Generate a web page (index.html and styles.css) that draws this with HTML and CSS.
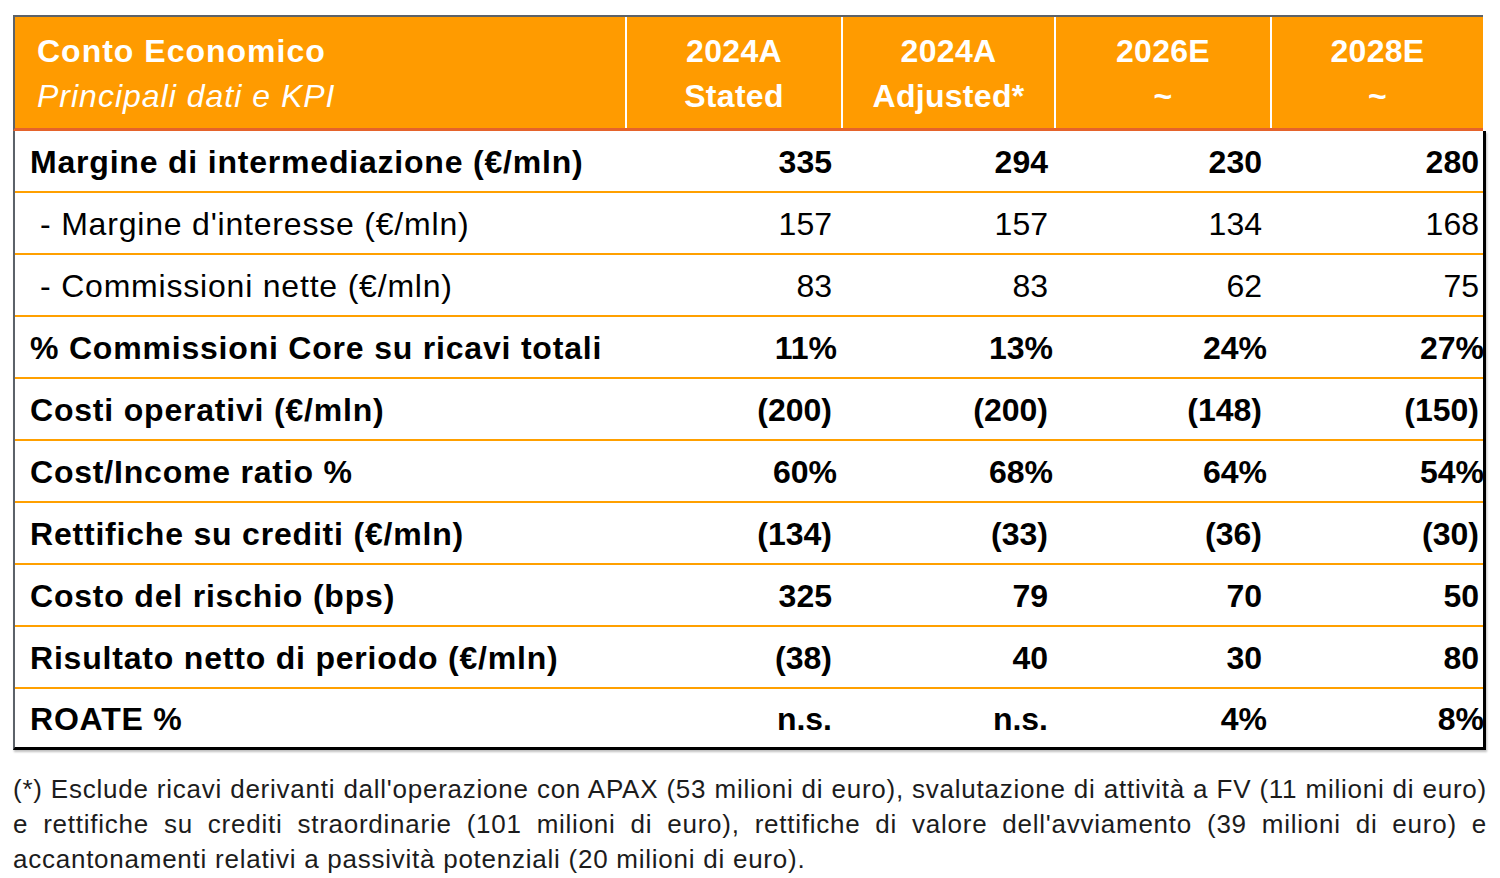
FILE: index.html
```html
<!DOCTYPE html>
<html lang="it">
<head>
<meta charset="utf-8">
<title>Conto Economico</title>
<link rel="stylesheet" href="styles.css">
</head>
<body>
<div class="page">
  <div class="kpi">
    <div class="head">
      <div class="hcell title">
        <div class="t1">Conto Economico</div>
        <div class="t2">Principali dati e KPI</div>
      </div>
      <div class="hcell col"><div>2024A</div><div>Stated</div></div>
      <div class="hcell col"><div>2024A</div><div>Adjusted*</div></div>
      <div class="hcell col"><div>2026E</div><div>~</div></div>
      <div class="hcell col"><div>2028E</div><div>~</div></div>
    </div>
    <div class="body">
      <div class="row bold">
        <div class="label">Margine di intermediazione (€/mln)</div>
        <div class="num">335</div><div class="num">294</div><div class="num">230</div><div class="num">280</div>
      </div>
      <div class="row sub">
        <div class="label">- Margine d'interesse (€/mln)</div>
        <div class="num">157</div><div class="num">157</div><div class="num">134</div><div class="num">168</div>
      </div>
      <div class="row sub">
        <div class="label">- Commissioni nette (€/mln)</div>
        <div class="num">83</div><div class="num">83</div><div class="num">62</div><div class="num">75</div>
      </div>
      <div class="row bold">
        <div class="label">% Commissioni Core su ricavi totali</div>
        <div class="num"><span class="pct">11%</span></div><div class="num"><span class="pct">13%</span></div><div class="num"><span class="pct">24%</span></div><div class="num"><span class="pct">27%</span></div>
      </div>
      <div class="row bold">
        <div class="label">Costi operativi (€/mln)</div>
        <div class="num">(200)</div><div class="num">(200)</div><div class="num">(148)</div><div class="num">(150)</div>
      </div>
      <div class="row bold">
        <div class="label">Cost/Income ratio %</div>
        <div class="num"><span class="pct">60%</span></div><div class="num"><span class="pct">68%</span></div><div class="num"><span class="pct">64%</span></div><div class="num"><span class="pct">54%</span></div>
      </div>
      <div class="row bold">
        <div class="label">Rettifiche su crediti (€/mln)</div>
        <div class="num">(134)</div><div class="num">(33)</div><div class="num">(36)</div><div class="num">(30)</div>
      </div>
      <div class="row bold">
        <div class="label">Costo del rischio (bps)</div>
        <div class="num">325</div><div class="num">79</div><div class="num">70</div><div class="num">50</div>
      </div>
      <div class="row bold">
        <div class="label">Risultato netto di periodo (€/mln)</div>
        <div class="num">(38)</div><div class="num">40</div><div class="num">30</div><div class="num">80</div>
      </div>
      <div class="row bold last">
        <div class="label">ROATE %</div>
        <div class="num">n.s.</div><div class="num">n.s.</div><div class="num"><span class="pct">4%</span></div><div class="num"><span class="pct">8%</span></div>
      </div>
    </div>
  </div>
  <div class="note">
    <div class="line just">(*) Esclude ricavi derivanti dall'operazione con APAX (53 milioni di euro), svalutazione di attività a FV (11 milioni di euro)</div>
    <div class="line just">e rettifiche su crediti straordinarie (101 milioni di euro), rettifiche di valore dell'avviamento (39 milioni di euro) e</div>
    <div class="line">accantonamenti relativi a passività potenziali (20 milioni di euro).</div>
  </div>
</div>
</body>
</html>
```

FILE: styles.css
```css
html, body {
  margin: 0;
  padding: 0;
  background: #ffffff;
}

body {
  font-family: "Liberation Sans", Arial, sans-serif;
  color: #000;
}

.page {
  padding: 15px 0 0 13px;
}

.kpi {
  width: 1473px;
}

.head {
  display: grid;
  grid-template-columns: 610px 216px 213px 216px 213px;
  width: 1468px;
  background: #ff9b00;
  border-top: 2px solid #5c6269;
  border-left: 2px solid #5c6269;
  border-bottom: 3px solid #e5632b;
  height: 111px;
}

.hcell {
  color: #fff;
  font-size: 32px;
  line-height: 45px;
  padding-top: 12px;
  box-sizing: border-box;
}

.title {
  padding-left: 22px;
  letter-spacing: 1px;
}

.title .t1 {
  font-weight: bold;
}

.title .t2 {
  font-style: italic;
}

.col {
  border-left: 2px solid #fff;
  text-align: center;
  font-weight: bold;
  letter-spacing: 0.3px;
}

.body {
  border-left: 2px solid #5c6269;
  border-right: 3px solid #000;
  border-bottom: 3px solid #000;
  box-shadow: 1px 2px 2px rgba(0, 0, 0, 0.25);
  width: 1468px;
}

.row {
  display: grid;
  grid-template-columns: 610px 216px 213px 216px 213px;
  height: 62px;
  align-items: center;
  border-bottom: 2px solid #ffa000;
  font-size: 32px;
  line-height: 36px;
  padding-top: 1px;
  box-sizing: border-box;
}

.row.last {
  height: 58px;
  border-bottom: none;
}

.row.bold {
  font-weight: bold;
}

.label {
  padding-left: 15px;
  letter-spacing: 0.8px;
  white-space: nowrap;
}

.row.sub .label {
  padding-left: 25px;
}

.num {
  text-align: right;
  white-space: nowrap;
}

.num:nth-child(2) { padding-right: 9px; }
.num:nth-child(3) { padding-right: 6px; }
.num:nth-child(4) { padding-right: 8px; }
.num:nth-child(5) { padding-right: 4px; }

.pct {
  margin-right: -5px;
}

.note {
  margin-top: 22px;
  width: 1474px;
  font-size: 26px;
  line-height: 35px;
  letter-spacing: 0.75px;
  color: #1c1c1c;
}

.note .line {
  white-space: nowrap;
}

.note .just {
  text-align: justify;
  text-align-last: justify;
  white-space: normal;
}
```
